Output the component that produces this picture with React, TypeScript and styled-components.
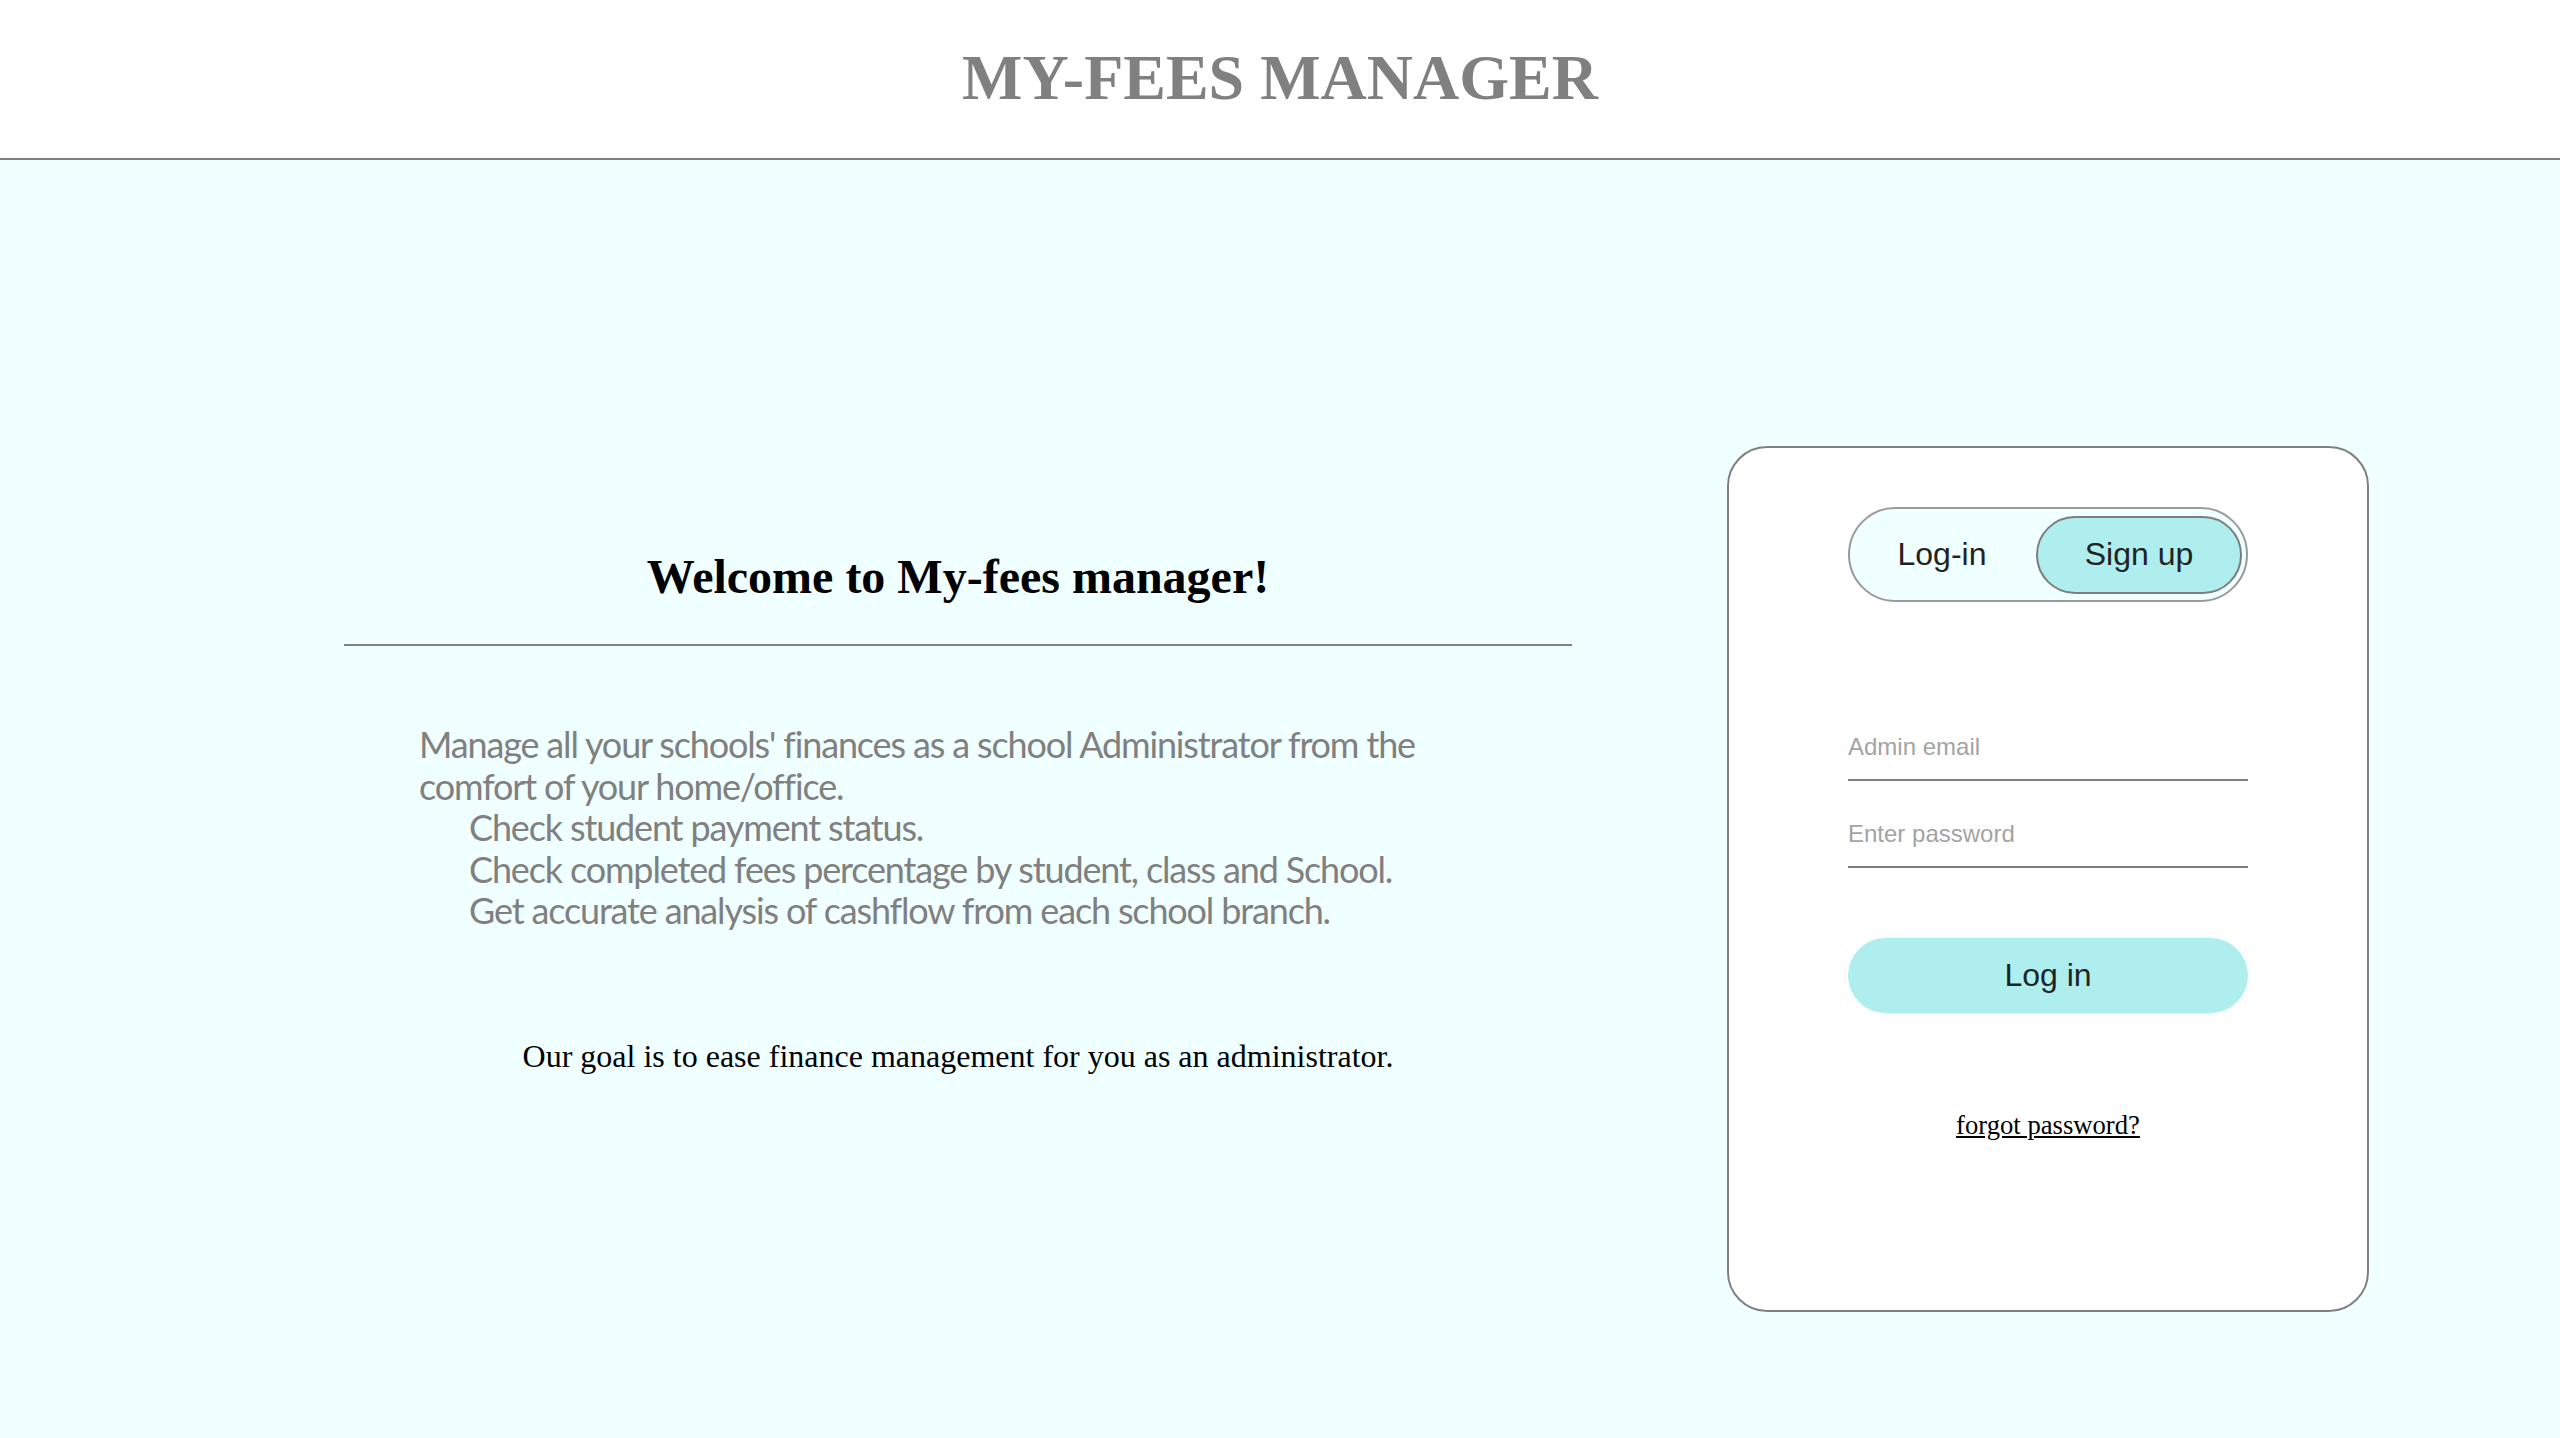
import React from "react";
import styled, { createGlobalStyle } from "styled-components";

const GlobalStyle = createGlobalStyle`
  html, body {
    margin: 0;
    padding: 0;
    background: #f0ffff;
  }
  body {
    font-family: "Liberation Serif", "Times New Roman", serif;
  }
  * { box-sizing: border-box; }
`;

const Page = styled.div`
  min-height: 100vh;
  display: flex;
  flex-direction: column;
  background: #f0ffff;
`;

const Header = styled.header`
  height: 160px;
  background: #ffffff;
  border-bottom: 2px solid #808080;
  display: flex;
  align-items: center;
  justify-content: center;
`;

const Title = styled.h1`
  margin: 0 0 2px;
  font-family: "Liberation Serif", "Times New Roman", serif;
  font-weight: bold;
  font-size: 64px;
  color: #808080;
`;

const Main = styled.main`
  flex: 1;
  display: flex;
  align-items: flex-start;
  padding-left: 344px;
`;

const Intro = styled.section`
  width: 1228px;
  padding-top: 389px;
  display: flex;
  flex-direction: column;
`;

const Welcome = styled.h2`
  margin: 0;
  text-align: center;
  font-family: "Liberation Serif", "Times New Roman", serif;
  font-weight: bold;
  font-size: 48px;
  color: #000;
`;

const Divider = styled.hr`
  margin: 40px 0 0;
  border: none;
  border-top: 2px solid #808080;
  height: 0;
`;

const Features = styled.div`
  margin-top: 78px;
  padding-left: 75px;
  font-family: Lato, "Open Sans", sans-serif;
  font-size: 36px;
  line-height: 41.6px;
  letter-spacing: -1.15px;
  color: #808080;
`;

const FeatureLine = styled.div<{ $indent?: boolean }>`
  padding-left: ${(p) => (p.$indent ? "50px" : "0")};
  white-space: nowrap;
`;

const Goal = styled.p`
  margin: 106px 0 0;
  text-align: center;
  font-family: "Liberation Serif", "Times New Roman", serif;
  font-size: 32px;
  color: #000;
`;

const Card = styled.div`
  margin-left: 155px;
  margin-top: 286px;
  width: 642px;
  height: 866px;
  background: #ffffff;
  border: 2px solid #808080;
  border-radius: 40px;
  padding: 59px 119px 0;
  display: flex;
  flex-direction: column;
`;

const Toggle = styled.div`
  height: 95px;
  border: 2px solid #9a9a9a;
  border-radius: 48px;
  background: #f0ffff;
  display: flex;
  align-items: center;
  justify-content: space-between;
  padding: 0 4px;
`;

const ToggleButton = styled.button<{ $active?: boolean; $w: number }>`
  width: ${(p) => p.$w}px;
  height: 78px;
  border-radius: 40px;
  border: ${(p) => (p.$active ? "2px solid #7d7d7d" : "none")};
  background: ${(p) => (p.$active ? "#afeeee" : "transparent")};
  font-family: "Liberation Sans", Arial, sans-serif;
  font-size: 32px;
  color: #222;
  padding: ${(p) => (p.$active ? "0" : "0 6px 0 0")};
  cursor: pointer;
`;

const Field = styled.input`
  width: 100%;
  height: 66px;
  border: none;
  border-bottom: 2px solid #808080;
  background: transparent;
  padding: 0;
  font-family: "Liberation Sans", Arial, sans-serif;
  font-size: 24px;
  color: #222;
  outline: none;
  &::placeholder {
    color: #a3a3a3;
  }
`;

const EmailField = styled(Field)`
  margin-top: 113px;
`;

const PasswordField = styled(Field)`
  margin-top: 21px;
`;

const LoginButton = styled.button`
  margin-top: 70px;
  width: 100%;
  height: 75px;
  border: none;
  border-radius: 38px;
  background: #afeeee;
  font-family: "Liberation Sans", Arial, sans-serif;
  font-size: 32px;
  color: #1c2626;
  padding: 0;
  cursor: pointer;
`;

const Forgot = styled.a`
  margin-top: 97px;
  align-self: center;
  font-family: "Liberation Serif", "Times New Roman", serif;
  font-size: 26.67px;
  color: #000;
  text-decoration: underline;
  cursor: pointer;
`;

export default function App() {
  return (
    <Page>
      <GlobalStyle />
      <Header>
        <Title>MY-FEES MANAGER</Title>
      </Header>
      <Main>
        <Intro>
          <Welcome>Welcome to My-fees manager!</Welcome>
          <Divider />
          <Features>
            <FeatureLine>
              Manage all your schools' finances as a school Administrator from the
            </FeatureLine>
            <FeatureLine>comfort of your home/office.</FeatureLine>
            <FeatureLine $indent>Check student payment status.</FeatureLine>
            <FeatureLine $indent>
              Check completed fees percentage by student, class and School.
            </FeatureLine>
            <FeatureLine $indent>
              Get accurate analysis of cashflow from each school branch.
            </FeatureLine>
          </Features>
          <Goal>Our goal is to ease finance management for you as an administrator.</Goal>
        </Intro>
        <Card>
          <Toggle>
            <ToggleButton $w={182}>Log-in</ToggleButton>
            <ToggleButton $w={206} $active>
              Sign up
            </ToggleButton>
          </Toggle>
          <EmailField type="email" placeholder="Admin email" />
          <PasswordField type="password" placeholder="Enter password" />
          <LoginButton>Log in</LoginButton>
          <Forgot>forgot password?</Forgot>
        </Card>
      </Main>
    </Page>
  );
}
